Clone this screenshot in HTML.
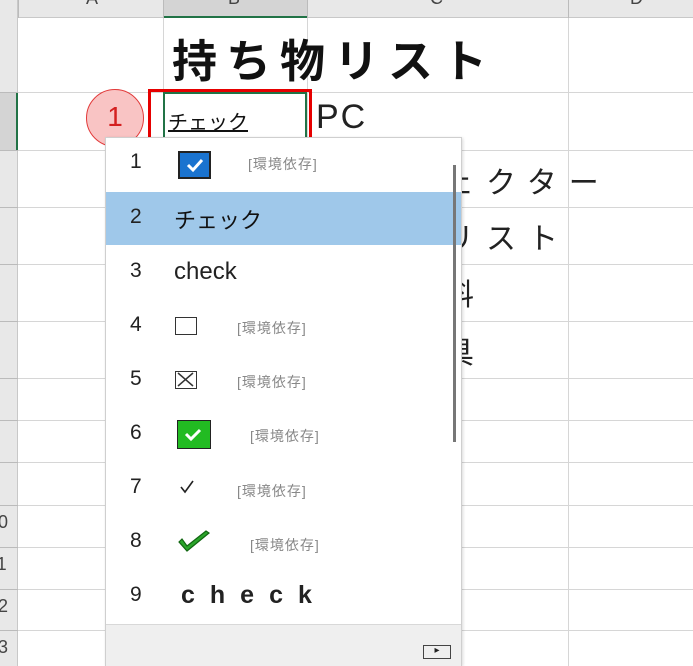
<!DOCTYPE html>
<html><head><meta charset="utf-8"><style>
*{margin:0;padding:0;box-sizing:border-box}
body{width:693px;height:666px;overflow:hidden;background:#fff;position:relative;font-family:"Liberation Sans","Noto Sans CJK JP",sans-serif;color:#222}
.a{position:absolute}
.hl{position:absolute;height:1px;background:#d6d6d6;left:18px;right:0}
.vl{position:absolute;width:1px;background:#d6d6d6;top:18px;bottom:0}
.ct{position:absolute;font-size:30px;letter-spacing:12px;color:#222;white-space:nowrap}
.num{position:absolute;left:130px;font-size:21px;color:#222}
.env{position:absolute;font-size:14px;color:#888;letter-spacing:1px}
.rn{position:absolute;left:-12px;font-size:18px;color:#444}
</style></head><body>
<div class="a" style="left:0;top:0;width:693px;height:18px;background:#e8e8e8;border-bottom:1px solid #c8c8c8"></div>
<div class="a" style="left:163px;top:0;width:144px;height:18px;background:#d4d4d4;border-bottom:2px solid #217346"></div>
<div class="a" style="left:0;top:0;width:18px;height:666px;background:#e8e8e8;border-right:1px solid #c8c8c8"></div>
<div class="a" style="left:0;top:92px;width:18px;height:58px;background:#d4d4d4;border-right:2px solid #217346"></div>
<div class="a" style="left:18px;top:0;width:1px;height:18px;background:#bbb"></div>
<div class="a" style="left:163px;top:0;width:1px;height:18px;background:#bbb"></div>
<div class="a" style="left:307px;top:0;width:1px;height:18px;background:#bbb"></div>
<div class="a" style="left:568px;top:0;width:1px;height:18px;background:#bbb"></div>
<div class="a" style="left:86px;top:-12px;font-size:18px;color:#444">A</div>
<div class="a" style="left:228px;top:-12px;font-size:18px;color:#444">B</div>
<div class="a" style="left:430px;top:-12px;font-size:18px;color:#444">C</div>
<div class="a" style="left:630px;top:-12px;font-size:18px;color:#444">D</div>
<div class="a" style="left:0;top:92px;width:18px;height:1px;background:#bbb"></div>
<div class="a" style="left:0;top:150px;width:18px;height:1px;background:#bbb"></div>
<div class="a" style="left:0;top:207px;width:18px;height:1px;background:#bbb"></div>
<div class="a" style="left:0;top:264px;width:18px;height:1px;background:#bbb"></div>
<div class="a" style="left:0;top:321px;width:18px;height:1px;background:#bbb"></div>
<div class="a" style="left:0;top:378px;width:18px;height:1px;background:#bbb"></div>
<div class="a" style="left:0;top:420px;width:18px;height:1px;background:#bbb"></div>
<div class="a" style="left:0;top:462px;width:18px;height:1px;background:#bbb"></div>
<div class="a" style="left:0;top:505px;width:18px;height:1px;background:#bbb"></div>
<div class="a" style="left:0;top:547px;width:18px;height:1px;background:#bbb"></div>
<div class="a" style="left:0;top:589px;width:18px;height:1px;background:#bbb"></div>
<div class="a" style="left:0;top:630px;width:18px;height:1px;background:#bbb"></div>
<div class="rn" style="top:512px">10</div>
<div class="rn" style="top:554px">11</div>
<div class="rn" style="top:596px">12</div>
<div class="rn" style="top:637px">13</div>
<div class="hl" style="top:92px"></div><div class="hl" style="top:150px"></div>
<div class="hl" style="top:207px"></div><div class="hl" style="top:264px"></div>
<div class="hl" style="top:321px"></div><div class="hl" style="top:378px"></div>
<div class="hl" style="top:420px"></div><div class="hl" style="top:462px"></div>
<div class="hl" style="top:505px"></div><div class="hl" style="top:547px"></div>
<div class="hl" style="top:589px"></div><div class="hl" style="top:630px"></div>
<div class="vl" style="left:163px;bottom:auto;height:132px"></div>
<div class="vl" style="left:307px;bottom:auto;height:132px"></div>
<div class="vl" style="left:568px"></div>
<div class="a" style="left:172px;top:25px;font-size:45px;font-weight:bold;letter-spacing:9px;color:#111">持ち物リスト</div>
<div class="ct" style="left:316px;top:98px;font-size:34px;letter-spacing:2px">PC</div>
<div class="ct" style="left:318px;top:158px">プロジェクター</div>
<div class="ct" style="left:318px;top:214px">持ち物リスト</div>
<div class="ct" style="left:318px;top:270px">配布資料</div>
<div class="ct" style="left:318px;top:328px">筆記用具</div>
<div class="a" style="left:163px;top:92px;width:144px;height:58px;border:2px solid #217346"></div>
<div class="a" style="left:168px;top:106px;font-size:20px;text-decoration:underline;color:#111">チェック</div>
<div class="a" style="left:148px;top:89px;width:164px;height:52px;border:3px solid #e60000"></div>
<div class="a" style="left:86px;top:89px;width:58px;height:58px;border-radius:50%;background:#f9c4c4;border:1.5px solid #e23a3a;font-size:28px;color:#d42020;text-align:center;line-height:54px">1</div>
<div class="a" style="left:105px;top:137px;width:357px;height:529px;background:#fff;border:1px solid #cfcfcf;box-shadow:1px 1px 3px rgba(0,0,0,.15)"></div>
<div class="a" style="left:106px;top:192px;width:355px;height:53px;background:#9fc8ea"></div>
<div class="a" style="left:453px;top:165px;width:3px;height:277px;background:#777"></div>
<div class="a" style="left:106px;top:624px;width:355px;height:42px;background:#efefef;border-top:1px solid #d8d8d8"></div>
<div class="a" style="left:423px;top:645px;width:28px;height:14px;border:1.5px solid #444;font-size:10px;line-height:10px;text-align:center">&#9656;</div>

<div class="num" style="top:150px">1</div>
<div class="a" style="left:178px;top:151px;width:33px;height:28px;background:#1a73cf;border:2px solid #222"><svg width="29" height="24" viewBox="0 0 29 24"><path d="M8 12l5 5 9-10" stroke="#fff" stroke-width="3" fill="none"/></svg></div>
<div class="env" style="left:248px;top:154px">[環境依存]</div>

<div class="num" style="top:205px">2</div>
<div class="a" style="left:174px;top:203px;font-size:22px;color:#111">チェック</div>

<div class="num" style="top:259px">3</div>
<div class="a" style="left:174px;top:258px;font-size:24px;color:#222">check</div>

<div class="num" style="top:313px">4</div>
<div class="a" style="left:175px;top:317px;width:22px;height:18px;border:1.5px solid #333"></div>
<div class="env" style="left:237px;top:318px">[環境依存]</div>

<div class="num" style="top:367px">5</div>
<div class="a" style="left:175px;top:371px;width:22px;height:18px;border:1.5px solid #333"><svg width="19" height="15" viewBox="0 0 19 15"><path d="M2 1l15 13M17 1L2 14" stroke="#333" stroke-width="1.5"/></svg></div>
<div class="env" style="left:237px;top:372px">[環境依存]</div>

<div class="num" style="top:421px">6</div>
<div class="a" style="left:177px;top:420px;width:34px;height:29px;background:#22bb22;border:1.5px solid #222"><svg width="31" height="26" viewBox="0 0 31 26"><path d="M8 13l5 5 9-9" stroke="#fff" stroke-width="3" fill="none"/></svg></div>
<div class="env" style="left:250px;top:426px">[環境依存]</div>

<div class="num" style="top:475px">7</div>
<svg class="a" style="left:179px;top:479px" width="16" height="16" viewBox="0 0 16 16"><path d="M2 8l4 5 8-11" stroke="#222" stroke-width="1.6" fill="none"/></svg>
<div class="env" style="left:237px;top:481px">[環境依存]</div>

<div class="num" style="top:529px">8</div>
<svg class="a" style="left:177px;top:530px" width="34" height="24" viewBox="0 0 34 24"><path d="M2 12l8 9L32 3l-3-2L10 16 5 9z" fill="#2aa52a" stroke="#116611" stroke-width="1.2"/></svg>
<div class="env" style="left:250px;top:535px">[環境依存]</div>

<div class="num" style="top:583px">9</div>
<div class="a" style="left:181px;top:581px;font-size:25px;font-weight:bold;letter-spacing:15px;color:#222">check</div>
</body></html>
